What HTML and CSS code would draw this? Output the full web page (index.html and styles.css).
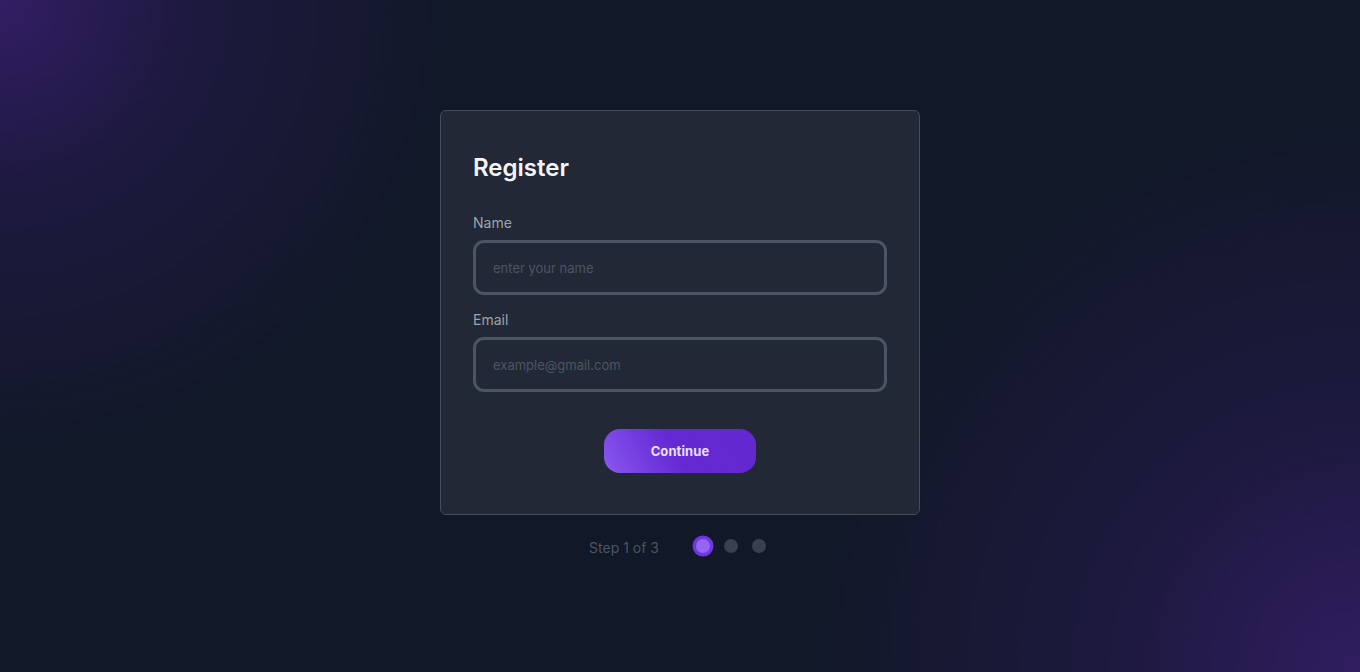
FILE: index.html
```html
<!DOCTYPE html>
<html lang="en">
<head>
<meta charset="utf-8">
<title>Register</title>
<link rel="stylesheet" href="styles.css">
</head>
<body>
<main class="page">
  <div class="column">
    <form class="card">
      <h1 class="title">Register</h1>
      <label class="label" for="name">Name</label>
      <input class="input" id="name" type="text" placeholder="enter your name">
      <label class="label label-next" for="email">Email</label>
      <input class="input" id="email" type="email" placeholder="example@gmail.com">
      <div class="actions">
        <button class="btn" type="button">Continue</button>
      </div>
    </form>
    <div class="steps">
      <span class="step-text">Step 1 of 3</span>
      <div class="dots">
        <span class="dot dot-active"></span>
        <span class="dot"></span>
        <span class="dot"></span>
      </div>
    </div>
  </div>
</main>
</body>
</html>
```

FILE: styles.css
```css
* { box-sizing: border-box; }
html, body { margin: 0; padding: 0; }
body {
  font-family: Inter, "Noto Sans", sans-serif;
  background-color: #111827;
  background-image:
    radial-gradient(circle 460px at 0 0, rgba(52, 30, 104, 0.95) 0%, rgba(38, 26, 80, 0.6) 40%, rgba(17, 24, 39, 0) 100%),
    radial-gradient(circle 560px at 100% 100%, rgba(50, 30, 100, 0.95) 0%, rgba(38, 26, 80, 0.6) 42%, rgba(17, 24, 39, 0) 100%);
  min-height: 100vh;
}
.page {
  min-height: 100vh;
  display: flex;
  align-items: center;
  justify-content: center;
  padding-bottom: 4px;
}
.column {
  display: flex;
  flex-direction: column;
  align-items: center;
}
.card {
  width: 480px;
  background: #222835;
  border: 1px solid #454c5a;
  border-radius: 6px;
  padding: 41px 32px 41px;
  display: flex;
  flex-direction: column;
}
.title {
  margin: 0 0 29px;
  font-size: 24px;
  line-height: 32px;
  font-weight: 600;
  color: #f3f4f6;
}
.label {
  font-size: 14px;
  line-height: 20px;
  color: #9ca3af;
  margin-bottom: 7px;
}
.label-next { margin-top: 15px; }
.input {
  height: 55px;
  width: 100%;
  border: 3px solid #4b5563;
  border-radius: 11px;
  background: transparent;
  padding: 0 17px;
  font-family: Inter, "Noto Sans", sans-serif;
  font-size: 13px;
  color: #e5e7eb;
  outline: none;
}
.input::placeholder { color: #4b5563; }
.actions {
  display: flex;
  justify-content: center;
  margin-top: 37px;
}
.btn {
  width: 152px;
  height: 44px;
  border: none;
  border-radius: 16px;
  background: linear-gradient(62deg, #8a58f0 0%, #7039de 30%, #6529d2 48%, #6428d0 100%);
  color: #e8e0ff;
  font-family: Inter, "Noto Sans", sans-serif;
  font-size: 13px;
  font-weight: 700;
  letter-spacing: 0.1px;
  cursor: pointer;
}
.steps {
  margin-top: 23px;
  display: flex;
  align-items: center;
  gap: 37px;
  margin-right: 5px;
}
.step-text {
  font-size: 14px;
  line-height: 20px;
  color: #4b5563;
}
.dots {
  display: flex;
  align-items: center;
  gap: 14px;
  margin-bottom: 5px;
}
.dot {
  width: 14px;
  height: 14px;
  border-radius: 50%;
  background: #3a404e;
}
.dot-active {
  background: #9366f4;
  box-shadow: 0 0 0 3.5px #7334e4;
}
```
